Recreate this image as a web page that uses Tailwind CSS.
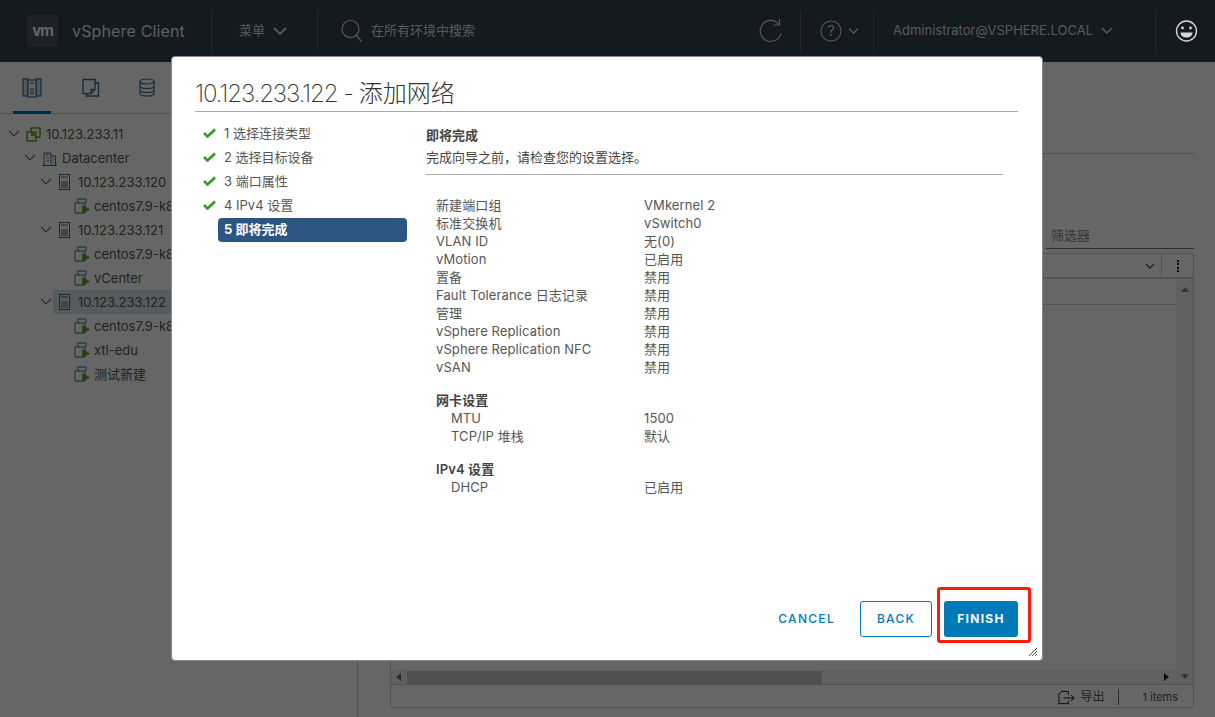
<!DOCTYPE html>
<html lang="zh">
<head>
  <meta charset="UTF-8">
  <title>vSphere Client</title>
  <script src="https://cdn.jsdelivr.net/npm/@tailwindcss/browser@4"></script>
</head>
<body class="relative h-[717px] w-[1215px] overflow-hidden bg-white text-[13px] text-[#565656] font-['Inter','Noto_Sans_CJK_SC',sans-serif]">

  <!-- top bar -->
  <header class="flex h-[62px] items-center bg-[#314351] text-[#d8dcdf]">
    <div class="ml-[27px] flex h-[32px] w-[31px] items-center justify-center rounded-[2px] bg-white/10 text-[15px] font-bold tracking-[-1px] text-white">vm</div>
    <div class="ml-[14px] w-[139px] text-[16px] tracking-[0.15px] text-[#e8ebed]">vSphere Client</div>
    <div class="h-[40px] w-px bg-white/20"></div>
    <div class="flex w-[105px] items-center gap-2 pl-[27px]">
      <span>菜单</span>
      <svg class="h-3 w-3.5" viewBox="0 0 14 10" fill="none" stroke="currentColor" stroke-width="1.8"><path d="M1 2l6 6 6-6"/></svg>
    </div>
    <div class="h-[40px] w-px bg-white/20"></div>
    <div class="flex flex-1 items-center gap-2 pl-[23px]">
      <svg class="h-[24px] w-[22px]" viewBox="0 0 22 24" fill="none" stroke="currentColor" stroke-width="1.2"><circle cx="9.5" cy="10" r="8.5"/><path d="M15.5 16.5l5 6"/></svg>
      <span>在所有环境中搜索</span>
    </div>
    <svg class="mr-[17px] h-[26px] w-[24px]" viewBox="0 0 24 26" fill="none" stroke="currentColor" stroke-width="1.2"><path d="M20 6.5A10.5 10.5 0 1 0 22 15"/><path d="M20.500 1v6h-6"/></svg>
    <div class="h-[40px] w-px bg-white/20"></div>
    <div class="flex w-[72px] items-center gap-[6px] pl-[19px]">
      <svg class="h-[24px] w-[22px]" viewBox="0 0 22 24" fill="none" stroke="currentColor" stroke-width="1.1"><circle cx="11" cy="12" r="10"/><text x="11" y="17" text-anchor="middle" font-size="14" fill="currentColor" stroke="none">?</text></svg>
      <svg class="h-2 w-[11px]" viewBox="0 0 11 8" fill="none" stroke="currentColor" stroke-width="1.3"><path d="M1 1.500l4.500 4.500 4.500-4.500"/></svg>
    </div>
    <div class="h-[40px] w-px bg-white/20"></div>
    <div class="flex w-[281px] items-center gap-2 pl-[19px] text-[13px]">
      <span>Administrator@VSPHERE.LOCAL</span>
      <svg class="h-2.5 w-3" viewBox="0 0 12 10" fill="none" stroke="currentColor" stroke-width="1.500"><path d="M1 2l5 5 5-5"/></svg>
    </div>
    <div class="h-[40px] w-px bg-white/20"></div>
    <!-- sits above the overlay, it stays bright in the picture -->
    <svg class="relative z-30 ml-[19px] mr-[17px] h-[24px] w-[23px] shrink-0 text-[#d5d7d9]" viewBox="0 0 23 24" fill="none" stroke="currentColor" stroke-width="1.4">
      <circle cx="11.500" cy="12" r="10"/>
      <circle cx="7.500" cy="9" r="1.400" fill="currentColor" stroke="none"/>
      <circle cx="15.500" cy="9" r="1.400" fill="currentColor" stroke="none"/>
      <path d="M5.500 13.500h12c0 3-2.500 5-6 5s-6-2-6-5z" fill="currentColor" stroke="none"/>
    </svg>
  </header>

  <div class="flex h-[655px]">
    <!-- inventory tree -->
    <aside class="w-[358px] shrink-0 border-r border-[#ccc]">
      <div class="flex h-[52px] items-center gap-[39px] border-b border-[#ccc] pl-[22px]">
        <div class="relative flex h-[52px] items-center">
          <svg class="h-[20px] w-[20px] text-[#2f6f94]" viewBox="0 0 20 20" fill="none" stroke="currentColor" stroke-width="1.200"><rect x="1" y="1" width="5" height="17" fill="#d5dde2"/><rect x="14" y="1" width="5" height="17" fill="#d5dde2"/><rect x="6" y="2" width="8" height="17" fill="#fff"/><rect x="8" y="10" width="4" height="7" fill="#b4b4b4" stroke="none"/><path d="M8 5h4"/></svg>
          <span class="absolute -left-[9px] -right-[9px] bottom-0 h-[3px] bg-[#0072a3]"></span>
        </div>
        <svg class="h-[19px] w-[19px] text-[#2f6f94]" viewBox="0 0 19 19" fill="none" stroke="currentColor" stroke-width="1.300"><path d="M2 1.500h12v10l-4 4H2z"/><path d="M14 5h3.500v13h-12v-2.500"/><path d="M10 15.500v-4h4"/></svg>
        <svg class="h-[19px] w-[16px] text-[#2f6f94]" viewBox="0 0 16 19" fill="none" stroke="currentColor" stroke-width="1.200"><ellipse cx="8" cy="3.500" rx="7" ry="2.500"/><path d="M1 3.500v12c0 1.500 3 2.500 7 2.500s7-1 7-2.500v-12M1 8c0 1.500 3 2.500 7 2.500S15 9.500 15 8M1 12c0 1.500 3 2.500 7 2.500s7-1 7-2.500"/></svg>
      </div>
      <ul class="pt-[8px] text-[13px] leading-[24px]">
        <li class="flex h-[24px] items-center pl-[8px]">
          <svg class="h-2 w-3 text-[#777]" viewBox="0 0 12 8" fill="none" stroke="currentColor" stroke-width="1.200"><path d="M1 1l5 5 5-5"/></svg>
          <svg class="ml-[6px] h-[15px] w-[15px]" viewBox="0 0 15 15" fill="none" stroke-width="1.500"><rect x="5" y="1" width="9" height="9" stroke="#5f9f1e"/><rect x="1" y="5" width="9" height="9" stroke="#5f9f1e" fill="#fff"/><rect x="5" y="6" width="4" height="3" fill="#d28a10"/></svg>
          <span class="ml-[5px]">10.123.233.11</span>
        </li>
        <li class="flex h-[24px] items-center pl-[24px]">
          <svg class="h-2 w-3 text-[#777]" viewBox="0 0 12 8" fill="none" stroke="currentColor" stroke-width="1.200"><path d="M1 1l5 5 5-5"/></svg>
          <svg class="ml-[6px] h-[15px] w-[15px] text-[#2f6f94]" viewBox="0 0 15 15" fill="none" stroke="currentColor"><path d="M0 14.500h15M2 14V2h7v12M9 5h4.500v9"/><path d="M4 4h3M4 7h3M4 10h3M11 8h1M11 11h1" stroke="#777"/></svg>
          <span class="ml-[5px]">Datacenter</span>
        </li>
        <li class="flex h-[24px] items-center pl-[40px]">
          <svg class="h-2 w-3 text-[#777]" viewBox="0 0 12 8" fill="none" stroke="currentColor" stroke-width="1.200"><path d="M1 1l5 5 5-5"/></svg>
          <svg class="ml-[7px] h-[16px] w-[11px] text-[#2f6f94]" viewBox="0 0 11 16" fill="none" stroke="currentColor"><rect x="0.500" y="0.500" width="10" height="15"/><path d="M2.500 3h6"/><rect x="2" y="7" width="7" height="7" fill="#aaa" stroke="none"/></svg>
          <span class="ml-[8px]">10.123.233.120</span>
        </li>
        <li class="flex h-[24px] items-center pl-[74px]">
          <svg class="h-[16px] w-[16px]" viewBox="0 0 16 16" fill="none"><path d="M4 5V1h8v4M1 5h10v10H1z" stroke="#2f6f94"/><path d="M8 7l8 4.500-8 4.500z" fill="#5f9f1e"/></svg>
          <span class="ml-[4px]">centos7.9-k8s</span>
        </li>
        <li class="flex h-[24px] items-center pl-[40px]">
          <svg class="h-2 w-3 text-[#777]" viewBox="0 0 12 8" fill="none" stroke="currentColor" stroke-width="1.200"><path d="M1 1l5 5 5-5"/></svg>
          <svg class="ml-[7px] h-[16px] w-[11px] text-[#2f6f94]" viewBox="0 0 11 16" fill="none" stroke="currentColor"><rect x="0.500" y="0.500" width="10" height="15"/><path d="M2.500 3h6"/><rect x="2" y="7" width="7" height="7" fill="#aaa" stroke="none"/></svg>
          <span class="ml-[8px]">10.123.233.121</span>
        </li>
        <li class="flex h-[24px] items-center pl-[74px]">
          <svg class="h-[16px] w-[16px]" viewBox="0 0 16 16" fill="none"><path d="M4 5V1h8v4M1 5h10v10H1z" stroke="#2f6f94"/><path d="M8 7l8 4.500-8 4.500z" fill="#5f9f1e"/></svg>
          <span class="ml-[4px]">centos7.9-k8s</span>
        </li>
        <li class="flex h-[24px] items-center pl-[74px]">
          <svg class="h-[16px] w-[16px]" viewBox="0 0 16 16" fill="none"><path d="M4 5V1h8v4M1 5h10v10H1z" stroke="#2f6f94"/><path d="M8 7l8 4.500-8 4.500z" fill="#5f9f1e"/></svg>
          <span class="ml-[4px]">vCenter</span>
        </li>
        <li class="flex h-[24px] items-center pl-[40px]">
          <svg class="h-2 w-3 text-[#777]" viewBox="0 0 12 8" fill="none" stroke="currentColor" stroke-width="1.200"><path d="M1 1l5 5 5-5"/></svg>
          <div class="ml-[1px] flex h-[24px] flex-1 items-center rounded-l-[3px] bg-[#d8e3e9] pl-[6px]">
            <svg class="h-[16px] w-[11px] text-[#2f6f94]" viewBox="0 0 11 16" fill="none" stroke="currentColor"><rect x="0.500" y="0.500" width="10" height="15"/><path d="M2.500 3h6"/><rect x="2" y="7" width="7" height="7" fill="#aaa" stroke="none"/></svg>
            <span class="ml-[8px]">10.123.233.122</span>
          </div>
        </li>
        <li class="flex h-[24px] items-center pl-[74px]">
          <svg class="h-[16px] w-[16px]" viewBox="0 0 16 16" fill="none"><path d="M4 5V1h8v4M1 5h10v10H1z" stroke="#2f6f94"/><path d="M8 7l8 4.500-8 4.500z" fill="#5f9f1e"/></svg>
          <span class="ml-[4px]">centos7.9-k8s</span>
        </li>
        <li class="flex h-[24px] items-center pl-[74px]">
          <svg class="h-[16px] w-[16px]" viewBox="0 0 16 16" fill="none"><path d="M4 5V1h8v4M1 5h10v10H1z" stroke="#2f6f94"/><path d="M8 7l8 4.500-8 4.500z" fill="#5f9f1e"/></svg>
          <span class="ml-[4px]">xtl-edu</span>
        </li>
        <li class="flex h-[24px] items-center pl-[74px]">
          <svg class="h-[16px] w-[16px]" viewBox="0 0 16 16" fill="none"><path d="M4 5V1h8v4M1 5h10v10H1z" stroke="#2f6f94"/><path d="M8 7l8 4.500-8 4.500z" fill="#5f9f1e"/></svg>
          <span class="ml-[4px]">测试新建</span>
        </li>
      </ul>
    </aside>

    <!-- main panel behind the dialog -->
    <main class="flex-1 pl-[32px] pr-[21px]">
      <div class="-ml-[32px] h-[92px] border-b border-[#ccc]"></div>
      <div class="flex h-[99px] items-end justify-end pb-[4px]">
        <div class="w-[148px] border-b border-[#777] pb-[3px] pl-[5px] text-[#888]">筛选器</div>
      </div>
      <div class="flex h-[455px] flex-col rounded-[3px] border border-[#ccc]">
        <div class="flex h-[25px] shrink-0 justify-end border-b-2 border-[#ccc]">
          <div class="flex w-[16px] items-center">
            <svg class="h-[6px] w-[10px] text-[#555]" viewBox="0 0 10 6" fill="none" stroke="currentColor" stroke-width="1.300"><path d="M1 1l4 4 4-4"/></svg>
          </div>
          <div class="flex w-[32px] items-center justify-center border-l border-[#ccc]">
            <span class="h-[12px] w-[2px] border-l-2 border-dotted border-[#222]"></span>
          </div>
        </div>
        <div class="flex min-h-0 flex-1">
          <div class="flex min-w-0 flex-1 flex-col">
            <div class="h-[26px] border-b border-[#ccc]"></div>
            <div class="mt-auto flex h-[14px] items-center bg-[#f0f0f0] pl-[5px] pr-[7px]">
              <span class="h-0 w-0 border-y-[4px] border-r-[5px] border-y-transparent border-r-[#666]"></span>
              <span class="ml-[6px] h-[13px] w-[415px] bg-[#c8c8c8]"></span>
              <span class="ml-auto h-0 w-0 border-y-[4px] border-l-[5px] border-y-transparent border-l-[#222]"></span>
            </div>
          </div>
          <div class="flex w-[17px] shrink-0 flex-col items-center justify-between bg-[#f0f0f0] pb-[5px] pt-[8px]">
            <span class="h-0 w-0 border-x-[4px] border-b-[5px] border-x-transparent border-b-[#888]"></span>
            <span class="h-0 w-0 border-x-[4px] border-t-[5px] border-x-transparent border-t-[#888]"></span>
          </div>
        </div>
        <div class="flex h-[23px] shrink-0 items-center justify-end border-t border-[#ccc] pr-[15px] pt-[2px] text-[11px]">
          <svg class="h-[15px] w-[17px] text-[#111]" viewBox="0 0 18 15" fill="none" stroke="currentColor"><path d="M11 11v3H1V4l3-3h7v4M6 8h11M14 5l3 3-3 3"/></svg>
          <span class="ml-[5px] text-[12px]">导出</span>
          <span class="ml-[14px] mr-[23px] h-[16px] w-px bg-[#777]"></span>
          <span>1 items</span>
        </div>
      </div>
    </main>
  </div>

  <!-- backdrop -->
  <div class="absolute inset-0 z-10 bg-black/60"></div>

  <!-- add network wizard -->
  <section class="absolute left-[171px] top-[56px] z-20 flex h-[605px] w-[872px] flex-col rounded-[4px] border border-[#888] bg-white pl-[23px] pr-[24px]">
    <h1 class="mt-[19px] h-[36px] border-b border-[#aaa] text-[24px] font-extralight leading-[36px] text-[#333]"><span class="tracking-[-1.1px]">10.123.233.122</span><span class="tracking-[-1px]"> - </span>添加网络</h1>

    <div class="flex min-h-0 flex-1">
      <!-- steps -->
      <ol class="w-[231px] shrink-0 pt-[9px] pl-[8px] leading-[24px] text-[#565656]">
        <li class="flex h-[24px] items-center gap-[8px]"><svg class="h-[10px] w-[13px]" viewBox="0 0 13 10" fill="none" stroke="#2f9e1f" stroke-width="2.600"><path d="M1 5l3.500 3.500L12 1.500"/></svg><span>1 选择连接类型</span></li>
        <li class="flex h-[24px] items-center gap-[8px]"><svg class="h-[10px] w-[13px]" viewBox="0 0 13 10" fill="none" stroke="#2f9e1f" stroke-width="2.600"><path d="M1 5l3.500 3.500L12 1.500"/></svg><span>2 选择目标设备</span></li>
        <li class="flex h-[24px] items-center gap-[8px]"><svg class="h-[10px] w-[13px]" viewBox="0 0 13 10" fill="none" stroke="#2f9e1f" stroke-width="2.600"><path d="M1 5l3.500 3.500L12 1.500"/></svg><span>3 端口属性</span></li>
        <li class="flex h-[24px] items-center gap-[8px]"><svg class="h-[10px] w-[13px]" viewBox="0 0 13 10" fill="none" stroke="#2f9e1f" stroke-width="2.600"><path d="M1 5l3.500 3.500L12 1.500"/></svg><span>4 IPv4 设置</span></li>
        <li class="ml-[15px] mt-[1px] h-[24px] w-[189px] rounded-[4px] bg-[#2b5582] pl-[6px] font-bold leading-[22px] text-white">5 即将完成</li>
      </ol>

      <!-- summary -->
      <div class="flex-1 pt-[12px] pr-[15px]">
        <div class="font-semibold leading-[22px] text-[#444]">即将完成</div>
        <div class="h-[29px] border-b border-[#aaa] leading-[22px] text-[#444]">完成向导之前，请检查您的设置选择。</div>
        <dl class="mt-[21px] grid grid-cols-[208px_1fr] pl-[10px] leading-[18px] tracking-[0.1px]">
          <dt>新建端口组</dt><dd>VMkernel 2</dd>
          <dt>标准交换机</dt><dd>vSwitch0</dd>
          <dt>VLAN ID</dt><dd>无(0)</dd>
          <dt>vMotion</dt><dd>已启用</dd>
          <dt>置备</dt><dd>禁用</dd>
          <dt>Fault Tolerance 日志记录</dt><dd>禁用</dd>
          <dt>管理</dt><dd>禁用</dd>
          <dt>vSphere Replication</dt><dd>禁用</dd>
          <dt>vSphere Replication NFC</dt><dd>禁用</dd>
          <dt>vSAN</dt><dd>禁用</dd>
          <dt class="col-span-2 mt-[15px] font-semibold text-[#444]">网卡设置</dt>
          <dt class="pl-[15px]">MTU</dt><dd>1500</dd>
          <dt class="pl-[15px]">TCP/IP 堆栈</dt><dd>默认</dd>
          <dt class="col-span-2 mt-[15px] font-semibold text-[#444]">IPv4 设置</dt>
          <dt class="pl-[15px]">DHCP</dt><dd>已启用</dd>
        </dl>
      </div>
    </div>

    <!-- footer buttons -->
    <div class="mb-[23px] flex h-[36px] items-center justify-end text-[12px] font-medium tracking-[1.3px]">
      <button class="mr-[25px] text-[#0079b8]">CANCEL</button>
      <button class="mr-[12px] h-[36px] w-[72px] rounded-[3px] border border-[#0079b8] text-[#0079b8]">BACK</button>
      <div class="relative">
        <button class="block h-[36px] w-[74px] rounded-[3px] bg-[#0079b8] font-bold text-white">FINISH</button>
        <!-- red annotation box from the screenshot -->
        <span class="absolute -left-[7px] -right-[13px] -top-[14px] -bottom-[6px] rounded-[3px] border-[3px] border-[#ff1a0f]"></span>
      </div>
    </div>

    <svg class="absolute bottom-[4px] right-[5px] h-[8px] w-[8px] text-[#555]" viewBox="0 0 8 8" stroke="currentColor"><path d="M0 8l8-8M3 8l5-5M6 8l2-2"/></svg>
  </section>
</body>
</html>
